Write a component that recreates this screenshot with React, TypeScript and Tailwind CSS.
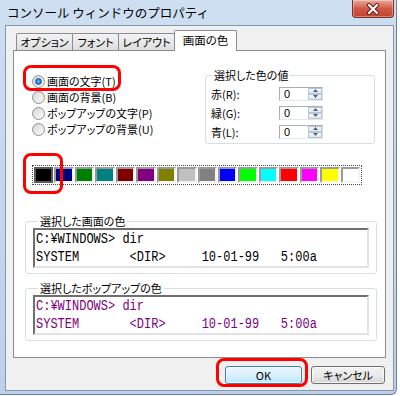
import React from 'react';

const swatches = [
  '#000000', '#000080', '#008000', '#008080', '#800000', '#800080', '#808000', '#c0c0c0',
  '#808080', '#0000ff', '#00ff00', '#00ffff', '#ff0000', '#ff00ff', '#ffff00', '#ffffff',
];

function Radio({ checked, label }: { checked?: boolean; label: string }) {
  return (
    <div className="flex h-[16px] items-center gap-[2px]">
      <div className="flex h-[13px] w-[13px] items-center justify-center rounded-full border border-[#8e8f8f] bg-linear-to-br from-[#d6d6d6] to-[#fbfbfb]">
        {checked ? (
          <div className="h-[7px] w-[7px] rounded-full bg-radial from-[#7cc5f7] via-[#2a84d2] to-[#1a5a9c] border border-[#1d5f9c]" />
        ) : (
          <div className="h-[7px] w-[7px] rounded-full bg-linear-to-br from-[#e0e0e0] to-[#f4f4f4]" />
        )}
      </div>
      <span className="leading-[16px]">{label}</span>
    </div>
  );
}

function SpinRow({ label }: { label: string }) {
  return (
    <div className="flex h-[19px] items-center">
      <span className="w-[68px] leading-[14px]">{label}</span>
      <div className="flex h-[14px] w-[44px] border border-[#abadb3] border-b-[#e3e9ef] border-r-[#dbdfe6] bg-white">
        <span className="flex-1 pl-[4px] text-[11px] leading-[12px] font-['Liberation_Sans',sans-serif]">0</span>
        <div className="flex w-[14px] flex-col">
          <div className="flex h-[6px] items-center justify-center border border-[#b9c6d6] bg-linear-to-b from-[#f5f8fb] to-[#dfe6ee]">
            <svg width="5" height="3" viewBox="0 0 5 3"><path d="M0 3 L2.5 0 L5 3 Z" fill="#4d6185" /></svg>
          </div>
          <div className="flex h-[6px] items-center justify-center border border-[#b9c6d6] bg-linear-to-b from-[#f5f8fb] to-[#dfe6ee]">
            <svg width="5" height="3" viewBox="0 0 5 3"><path d="M0 0 L2.5 3 L5 0 Z" fill="#4d6185" /></svg>
          </div>
        </div>
      </div>
    </div>
  );
}

function Console({ color, title }: { color: string; title: string }) {
  return (
    <fieldset className="ml-[11px] w-[351px] rounded-[3px] border border-[#d5dfe5] px-[7px] pb-[5px]">
      <legend className="ml-[5px] px-[2px] leading-[14px]">{title}</legend>
      <div className="h-[40px] w-[336px] overflow-hidden border-2 border-t-[#6f6f6f] border-l-[#6f6f6f] border-b-[#e3e3e3] border-r-[#e3e3e3] bg-white">
        <div
          className={`origin-top scale-y-[1.22] whitespace-pre pl-[1px] pt-[1px] font-['Liberation_Mono',monospace] text-[12px] leading-[14px] ${color}`}
        >
          <div>{'C:¥WINDOWS> dir'}</div>
          <div>{'SYSTEM       <DIR>     10-01-99   5:00a'}</div>
          <div>{'SYSTEM32     <DIR>     10-01-99   5:00a'}</div>
        </div>
      </div>
    </fieldset>
  );
}

export default function App() {
  return (
    <div className="relative h-[396px] w-[400px] overflow-hidden bg-white font-['Noto_Sans_CJK_JP','Noto_Sans',sans-serif] text-[11px] text-black [font-feature-settings:'palt']">
      <div className="flex h-[395px] w-[397px] flex-col rounded-br-[6px] border-r border-b border-[#6c8099] bg-linear-to-b from-[#cddff1] via-[#c3d7ec] to-[#bcd1e9]">
        {/* title bar */}
        <div className="flex h-[25px] items-start justify-between">
          <span className="pl-[7px] pt-[4px] text-[12.5px] leading-[17px] text-black [font-feature-settings:normal]">
            コンソール ウィンドウのプロパティ
          </span>
          <div className="mr-[2px] flex h-[18px] w-[42px] items-center justify-center rounded-b-[4px] border border-t-0 border-[#7c2e22] bg-linear-to-b from-[#eaa99b] via-[#cf5844] to-[#c24430] shadow-[inset_0_0_0_1px_rgba(255,255,255,0.35)]">
            <svg width="14" height="12" viewBox="0 0 14 12">
              <path d="M3 2 L11 10 M11 2 L3 10" stroke="#5a1a12" strokeWidth="4" strokeLinecap="round" />
              <path d="M3 2 L11 10 M11 2 L3 10" stroke="#ffffff" strokeWidth="2.2" strokeLinecap="round" />
            </svg>
          </div>
        </div>

        {/* client area */}
        <div className="ml-[5px] flex h-[366px] w-[389px] flex-col border border-[#8698ae] bg-[#f0f0f0]">
          {/* tabs */}
          <div className="relative z-10 ml-[10px] mt-[5px] flex h-[19px] items-end">
            <div className="flex h-[17px] w-[57px] items-center justify-center rounded-t-[2px] border border-b-0 border-[#898c95] bg-linear-to-b from-[#f3f3f3] to-[#dedede] leading-[14px]">
              オプション
            </div>
            <div className="-ml-px flex h-[17px] w-[47px] items-center justify-center rounded-t-[2px] border border-b-0 border-[#898c95] bg-linear-to-b from-[#f3f3f3] to-[#dedede] leading-[14px]">
              フォント
            </div>
            <div className="-ml-px flex h-[17px] w-[57px] items-center justify-center rounded-t-[2px] border border-b-0 border-[#898c95] bg-linear-to-b from-[#f3f3f3] to-[#dedede] leading-[14px]">
              レイアウト
            </div>
            <div className="-mb-px -ml-px flex h-[21px] w-[63px] items-start justify-center rounded-t-[2px] border border-b-0 border-[#898c95] bg-white pt-[1px] text-[11.5px] leading-[16px]">
              画面の色
            </div>
          </div>

          {/* panel */}
          <div className="mx-[7px] flex h-[308px] flex-col border border-[#898c95] bg-white">
            <div className="flex items-start">
              <div className="flex w-[191px] flex-col pl-[18px] pt-[22px]">
                <Radio checked label="画面の文字(T)" />
                <Radio label="画面の背景(B)" />
                <Radio label="ポップアップの文字(P)" />
                <Radio label="ポップアップの背景(U)" />
              </div>
              <fieldset className="mt-[17px] h-[76px] w-[170px] rounded-[3px] border border-[#d5dfe5] px-[5px] pt-[2px]">
                <legend className="ml-[1px] px-[2px] leading-[14px]">選択した色の値</legend>
                <SpinRow label="赤(R):" />
                <SpinRow label="緑(G):" />
                <SpinRow label="青(L):" />
              </fieldset>
            </div>

            {/* palette */}
            <div className="ml-[18px] mt-[21px] h-[20px] w-[330px] border border-dotted border-[#4a4a4a] p-[1px]">
              <div className="grid h-full grid-cols-16 gap-[1px]">
                {swatches.map((c, i) => (
                  <div
                    key={c}
                    className={
                      i === 0
                        ? 'border-2 border-[#5c5c5c] bg-black'
                        : 'border-2 border-t-[#9a9a9a] border-l-[#9a9a9a] border-b-[#f4f4f4] border-r-[#f4f4f4]'
                    }
                    style={i === 0 ? undefined : { backgroundColor: c }}
                  />
                ))}
              </div>
            </div>

            <div className="mt-[29px]">
              <Console color="text-black" title="選択した画面の色" />
            </div>
            <div className="mt-[7px]">
              <Console color="text-[#800080]" title="選択したポップアップの色" />
            </div>
          </div>

          {/* buttons */}
          <div className="mt-[8px] flex justify-end gap-[9px] pr-[8px]">
            <button className="flex h-[18px] w-[77px] items-center justify-center rounded-[3px] border border-[#3c7fb1] bg-linear-to-b from-[#eaf6fd] via-[#d9f0fc] to-[#bee6fd] leading-[14px] shadow-[inset_0_0_0_1px_rgba(255,255,255,0.7)]">
              OK
            </button>
            <button className="flex h-[18px] w-[74px] items-center justify-center rounded-[3px] border border-[#707070] bg-linear-to-b from-[#f2f2f2] via-[#ebebeb] to-[#d5d5d5] leading-[14px] shadow-[inset_0_0_0_1px_rgba(255,255,255,0.7)]">
              キャンセル
            </button>
          </div>
        </div>
      </div>

      {/* red annotation boxes */}
      <div className="pointer-events-none absolute left-[23px] top-[65px] h-[26px] w-[98px] rounded-[8px] border-[3px] border-[#ff0000]" />
      <div className="pointer-events-none absolute left-[23px] top-[153px] h-[41px] w-[40px] rounded-[8px] border-[3px] border-[#ff0000]" />
      <div className="pointer-events-none absolute left-[216px] top-[358px] h-[29px] w-[92px] rounded-[8px] border-[3px] border-[#ff0000]" />
    </div>
  );
}
